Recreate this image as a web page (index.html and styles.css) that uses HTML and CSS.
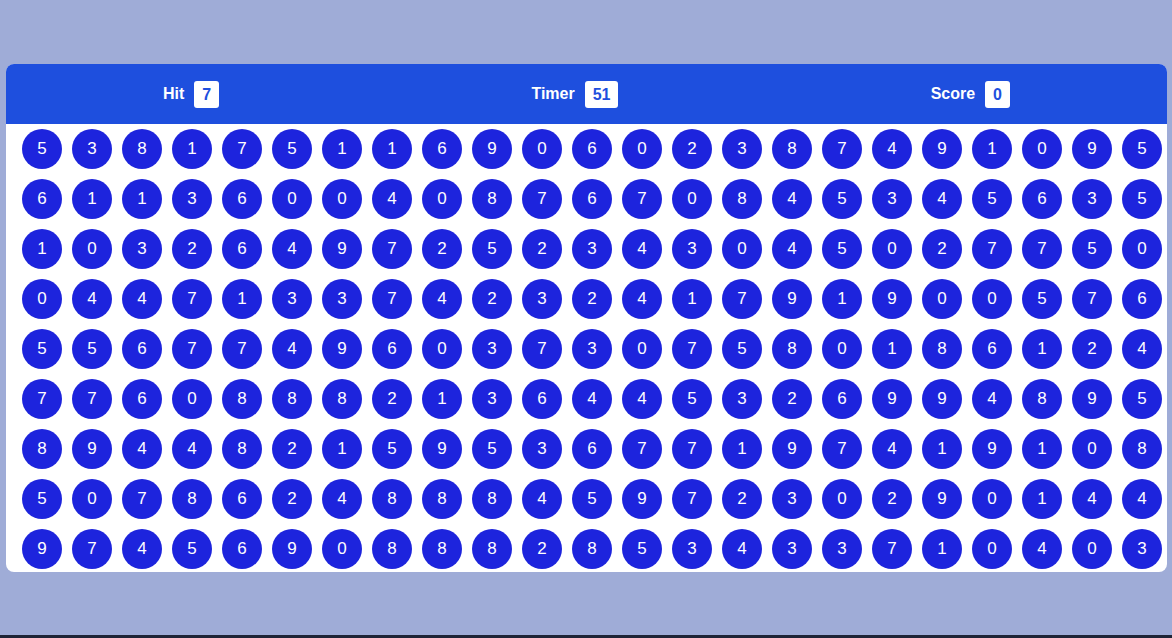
FILE: index.html
```html
<!DOCTYPE html>
<html lang="en">
<head>
    <meta charset="UTF-8">
    <meta name="viewport" content="width=device-width, initial-scale=1.0">
    <title>Bubble Game</title>
    <link rel="stylesheet" href="styles.css">
</head>
<body>
    <div class="main">
        <div class="panel">
            <div class="ptop">
                <div class="elem">
                    <h4>Hit</h4>
                    <div class="box" id="hitval">7</div>
                </div>
                <div class="elem">
                    <h4>Timer</h4>
                    <div class="box" id="timerval">51</div>
                </div>
                <div class="elem">
                    <h4>Score</h4>
                    <div class="box" id="scoreval">0</div>
                </div>
            </div>
            <div class="pbtm" id="pbtm"></div>
        </div>
    </div>
    <div class="bottom-strip"></div>

    <script>
        var rows = [
            "53817511690602387491095",
            "61136004087670845345635",
            "10326497252343045027750",
            "04471337423241791900576",
            "55677496037307580186124",
            "77608882136445326994895",
            "89448215953677197419108",
            "50786248884597230290144",
            "97456908882853433710403"
        ];
        var clutter = "";
        rows.forEach(function (row) {
            for (var i = 0; i < row.length; i++) {
                clutter += '<div class="bubble">' + row[i] + '</div>';
            }
        });
        document.getElementById("pbtm").innerHTML = clutter;
    </script>
</body>
</html>
```

FILE: styles.css
```css
* { margin: 0; padding: 0; box-sizing: border-box; font-family: "Liberation Sans", Arial, sans-serif; }
html, body { width: 100%; height: 100%; }
body { display: flex; flex-direction: column; background-color: #9facd7; }
.main { flex: 1; padding: 64px 0 0 6px; }
.panel { width: 1161px; height: 508px; background-color: #fff; border-radius: 8px; overflow: hidden; }
.ptop { height: 60px; padding: 0 157px; display: flex; align-items: center; justify-content: space-between; background-color: #1e4fde; color: #fff; }
.elem { display: flex; align-items: center; gap: 10px; }
.elem h4 { font-size: 16px; font-weight: bold; }
.box { padding: 4px 8px; line-height: 19px; font-size: 16px; font-weight: bold; color: #1e4fde; background-color: #fff; border-radius: 3px; }
.pbtm { display: grid; grid-template-columns: repeat(23, 40px); gap: 10px; padding: 5px 0 0 16px; }
.bubble { width: 40px; height: 40px; border-radius: 50%; background-color: #1d24dd; color: #fff; font-size: 17px; display: flex; align-items: center; justify-content: center; }
.bottom-strip { height: 3px; background-color: #1e2436; }
```
